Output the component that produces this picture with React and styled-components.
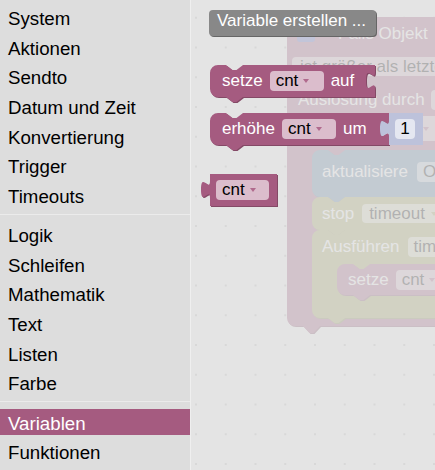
import React from 'react';
import styled, { createGlobalStyle } from 'styled-components';

const GlobalStyle = createGlobalStyle`
  html, body { margin: 0; padding: 0; }
  body { font-family: "Liberation Sans", Arial, sans-serif; background: #fff; }
`;

const Page = styled.div`
  display: flex;
  width: 435px;
  height: 470px;
  overflow: hidden;
`;

const Toolbox = styled.nav`
  flex: 0 0 190px;
  background: #ddd;
  border-right: 1px solid #efefef;
  display: flex;
  flex-direction: column;
  padding-top: 4px;
`;

const Category = styled.div`
  height: 26px;
  line-height: 29px;
  margin-bottom: 3.67px;
  padding-left: 8px;
  font-size: 18.7px;
  white-space: nowrap;
  color: ${(p) => (p.$selected ? '#fff' : '#000')};
  background: ${(p) => (p.$selected ? '#a55b80' : 'transparent')};
`;

const Separator = styled.div`
  height: 1px;
  background: #ebebeb;
  margin: 2px 0 6.5px;
`;

const Workspace = styled.div`
  position: relative;
  flex: 1;
  background-color: #fff;
  background-image: radial-gradient(circle, #c2c2c2 0 1px, transparent 1.5px);
  background-size: 29.75px 29.75px;
  background-position: -9.875px 2.875px;
  overflow: hidden;
`;

const Flyout = styled.div`
  position: absolute;
  inset: 0;
  background: rgba(221, 221, 221, 0.8);
`;

const BlockBox = styled.div`
  position: absolute;
  left: ${(p) => p.$x}px;
  top: ${(p) => p.$y}px;
  width: ${(p) => p.$w}px;
  height: ${(p) => p.$h}px;
`;

const Shape = styled.svg`
  position: absolute;
  left: 0;
  top: 0;
  width: 100%;
  height: 100%;
  overflow: visible;
`;

const Column = styled.div`
  position: relative;
  display: flex;
  flex-direction: column;
`;

const Line = styled.div`
  position: relative;
  display: flex;
  align-items: center;
  height: ${(p) => (p.$h ? `${p.$h}px` : '100%')};
  padding-left: ${(p) => p.$pad ?? 12}px;
  gap: ${(p) => p.$gap ?? 7}px;
  font-size: 17px;
  color: #fff;
  white-space: nowrap;
`;

const Field = styled.div`
  display: flex;
  align-items: center;
  justify-content: ${(p) => (p.$center ? 'center' : p.$end ? 'flex-end' : 'flex-start')};
  flex: none;
  box-sizing: border-box;
  width: ${(p) => p.$w}px;
  height: ${(p) => p.$h ?? 20}px;
  padding-left: ${(p) => (p.$center ? 0 : p.$pl ?? 6)}px;
  padding-right: ${(p) => p.$pr ?? 0}px;
  border-radius: 4px;
  background: rgba(255, 255, 255, 0.6);
  color: #000;
  font-size: 17px;
  overflow: hidden;
`;

const Arrow = styled.span`
  flex: none;
  width: 0;
  height: 0;
  border-left: 3.5px solid transparent;
  border-right: 3.5px solid transparent;
  border-top: 4.5px solid ${(p) => p.$c ?? '#b06a8d'};
  margin-left: ${(p) => p.$ml ?? 5}px;
`;

const MutatorIcon = styled.span`
  flex: none;
  width: 18px;
  height: 16px;
  border-radius: 3px;
  background: #5563c8;
`;

const FlyoutButton = styled.div`
  position: absolute;
  left: 18px;
  top: 10px;
  width: 167px;
  height: 26px;
  box-sizing: border-box;
  border-radius: 4px;
  background: #888;
  box-shadow: 1px 1px 0 #666;
  color: #fff;
  font-size: 17px;
  line-height: 21px;
  padding-left: 8px;
  white-space: nowrap;
`;

const PINK = '#a55b80';
const PINK_D = '#844966';
const BLUE = '#5b80a5';
const BLUE_D = '#496684';
const OLIVE = '#a5a55b';
const OLIVE_D = '#848449';
const SHADOW_MATH = '#bdc2db';

const stmtPath = (w, h, { input = false, bd = 5 } = {}) =>
  `M0,8 A8,8 0 0 1 8,0 H16 l6.5,5 h4 l6.5,-5 H${w}` +
  (input ? ` V7 c0,11.33 -9,-9.07 -9,8.5 s9,-2.83 9,8.5` : '') +
  ` V${h} H33 l-6.5,${bd} h-4 l-6.5,-${bd} H8 A8,8 0 0 1 0,${h - 8} Z`;

const valuePath = (w, h) =>
  `M0,0 H${w} V${h} H0 V24 c0,-11.33 -9,9.07 -9,-8.5 s9,2.83 9,-8.5 Z`;

function Block({ x, y, w, h, color, dark, d, children }) {
  return (
    <BlockBox $x={x} $y={y} $w={w} $h={h}>
      <Shape>
        {dark && <path d={d} fill={dark} transform="translate(1,1)" />}
        <path d={d} fill={color} />
      </Shape>
      {children}
    </BlockBox>
  );
}

const groups = [
  ['System', 'Aktionen', 'Sendto', 'Datum und Zeit', 'Konvertierung', 'Trigger', 'Timeouts'],
  ['Logik', 'Schleifen', 'Mathematik', 'Text', 'Listen', 'Farbe'],
  ['Variablen', 'Funktionen'],
];

export default function App() {
  return (
    <>
      <GlobalStyle />
      <Page>
        <Toolbox>
          {groups.map((g, gi) => (
            <React.Fragment key={gi}>
              {gi > 0 && <Separator />}
              {g.map((name) => (
                <Category key={name} $selected={name === 'Variablen'}>
                  {name}
                </Category>
              ))}
            </React.Fragment>
          ))}
        </Toolbox>

        <Workspace>
          {/* program on the workspace, seen through the flyout */}
          <Block x={96} y={17} w={200} h={309} color={PINK} dark={PINK_D} d={stmtPath(200, 309, { bd: 7 })}>
            <Column>
              <Line $h={33} $pad={10} $gap={23}>
                <MutatorIcon />
                <span>Falls Objekt</span>
              </Line>
              <Line $h={33} $pad={5}>
                <Field $w={220} $h={19} $pl={8}>ist größer als letzter</Field>
              </Line>
              <Line $h={33} $pad={11} $gap={6}>
                <span>Auslösung durch</span>
                <Field $w={60} />
              </Line>
              <Line $h={25} $pad={43}>
                <Field $w={112} $h={25} $end $pr={13}>
                  <Arrow $c={PINK} $ml={0} />
                </Field>
              </Line>
            </Column>
          </Block>

          <Block x={121} y={150} w={200} h={47} color={BLUE} dark={BLUE_D} d={stmtPath(200, 47)}>
            <Line $h={43} $pad={10} $gap={9}>
              <span>aktualisiere</span>
              <Field $w={90}>Objekt-ID</Field>
            </Line>
          </Block>

          <Block x={121} y={197} w={200} h={33} color={OLIVE} dark={OLIVE_D} d={stmtPath(200, 33)}>
            <Line $pad={10} $gap={8}>
              <span>stop</span>
              <Field $w={100} $h={19} $pl={7}>
                timeout
                <Arrow $c={OLIVE} $ml={6} />
              </Field>
            </Line>
          </Block>

          <Block x={121} y={230} w={200} h={88} color={OLIVE} dark={OLIVE_D} d={stmtPath(200, 88)}>
            <Line $h={33} $pad={10} $gap={8}>
              <span>Ausführen</span>
              <Field $w={90}>timeout</Field>
            </Line>
          </Block>

          <Block x={146} y={264} w={150} h={31} color={PINK} dark={PINK_D} d={stmtPath(150, 31)}>
            <Line $pad={11} $gap={7}>
              <span>setze</span>
              <Field $w={54}>
                cnt
                <Arrow $c={PINK} />
              </Field>
            </Line>
          </Block>

          <Flyout>
            <FlyoutButton>Variable erstellen ...</FlyoutButton>

            <Block x={19} y={65} w={165} h={32} color={PINK} dark={PINK_D} d={stmtPath(165, 32, { input: true })}>
              <Line>
                <span>setze</span>
                <Field $w={54}>
                  cnt
                  <Arrow />
                </Field>
                <span>auf</span>
              </Line>
            </Block>

            <Block x={19} y={113} w={179} h={32} color={PINK} dark={PINK_D} d={stmtPath(179, 32, { input: true })}>
              <Line>
                <span>erhöhe</span>
                <Field $w={54}>
                  cnt
                  <Arrow />
                </Field>
                <span>um</span>
              </Line>
            </Block>

            <Block x={198} y={113} w={34} h={32} color={SHADOW_MATH} d={valuePath(34, 32)}>
              <Line $pad={6}>
                <Field $w={20} $center>1</Field>
              </Line>
            </Block>

            <Block x={19} y={174} w={67} h={32} color={PINK} dark={PINK_D} d={valuePath(67, 32)}>
              <Line $pad={6}>
                <Field $w={53}>
                  cnt
                  <Arrow />
                </Field>
              </Line>
            </Block>
          </Flyout>
        </Workspace>
      </Page>
    </>
  );
}
